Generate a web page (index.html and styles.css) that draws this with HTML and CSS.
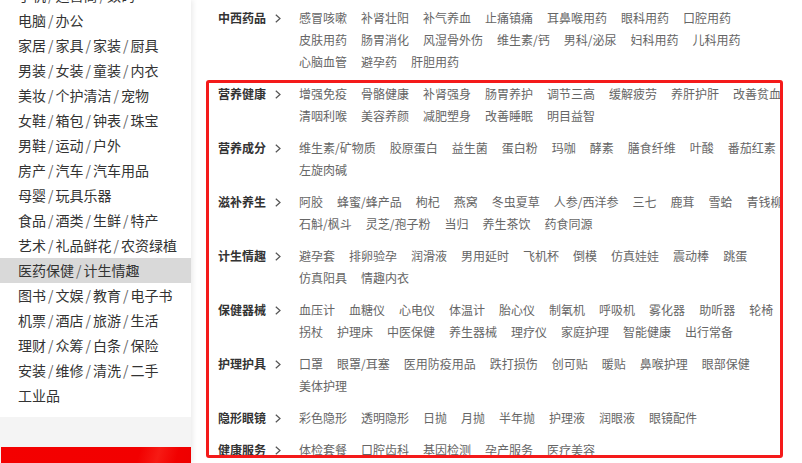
FILE: index.html
```html
<!DOCTYPE html>
<html lang="zh-CN">
<head>
<meta charset="utf-8">
<title>医药保健 / 计生情趣</title>
<link rel="stylesheet" href="styles.css">
</head>
<body>
<div class="page">
  <aside class="cate">
    <ul class="cate-list">
      <li class="cate-item"><a>手机</a><span class="sep">/</span><a>运营商</a><span class="sep">/</span><a>数码</a></li>
      <li class="cate-item"><a>电脑</a><span class="sep">/</span><a>办公</a></li>
      <li class="cate-item"><a>家居</a><span class="sep">/</span><a>家具</a><span class="sep">/</span><a>家装</a><span class="sep">/</span><a>厨具</a></li>
      <li class="cate-item"><a>男装</a><span class="sep">/</span><a>女装</a><span class="sep">/</span><a>童装</a><span class="sep">/</span><a>内衣</a></li>
      <li class="cate-item"><a>美妆</a><span class="sep">/</span><a>个护清洁</a><span class="sep">/</span><a>宠物</a></li>
      <li class="cate-item"><a>女鞋</a><span class="sep">/</span><a>箱包</a><span class="sep">/</span><a>钟表</a><span class="sep">/</span><a>珠宝</a></li>
      <li class="cate-item"><a>男鞋</a><span class="sep">/</span><a>运动</a><span class="sep">/</span><a>户外</a></li>
      <li class="cate-item"><a>房产</a><span class="sep">/</span><a>汽车</a><span class="sep">/</span><a>汽车用品</a></li>
      <li class="cate-item"><a>母婴</a><span class="sep">/</span><a>玩具乐器</a></li>
      <li class="cate-item"><a>食品</a><span class="sep">/</span><a>酒类</a><span class="sep">/</span><a>生鲜</a><span class="sep">/</span><a>特产</a></li>
      <li class="cate-item"><a>艺术</a><span class="sep">/</span><a>礼品鲜花</a><span class="sep">/</span><a>农资绿植</a></li>
      <li class="cate-item is-active"><a>医药保健</a><span class="sep">/</span><a>计生情趣</a></li>
      <li class="cate-item"><a>图书</a><span class="sep">/</span><a>文娱</a><span class="sep">/</span><a>教育</a><span class="sep">/</span><a>电子书</a></li>
      <li class="cate-item"><a>机票</a><span class="sep">/</span><a>酒店</a><span class="sep">/</span><a>旅游</a><span class="sep">/</span><a>生活</a></li>
      <li class="cate-item"><a>理财</a><span class="sep">/</span><a>众筹</a><span class="sep">/</span><a>白条</a><span class="sep">/</span><a>保险</a></li>
      <li class="cate-item"><a>安装</a><span class="sep">/</span><a>维修</a><span class="sep">/</span><a>清洗</a><span class="sep">/</span><a>二手</a></li>
      <li class="cate-item"><a>工业品</a></li>
    </ul>
    <div class="cate-gap"></div>
    <div class="cate-banner"></div>
  </aside>

  <section class="panel">
    <dl class="grp">
      <dt class="grp-title">中西药品<svg class="chev" width="6" height="9" viewBox="0 0 6 9"><polyline points="0.8,0.8 5,4.5 0.8,8.2"/></svg></dt>
      <dd class="grp-items"><a>感冒咳嗽</a><a>补肾壮阳</a><a>补气养血</a><a>止痛镇痛</a><a>耳鼻喉用药</a><a>眼科用药</a><a>口腔用药</a><a>皮肤用药</a><a>肠胃消化</a><a>风湿骨外伤</a><a>维生素/钙</a><a>男科/泌尿</a><a>妇科用药</a><a>儿科用药</a><a>心脑血管</a><a>避孕药</a><a>肝胆用药</a></dd>
    </dl>
    <dl class="grp">
      <dt class="grp-title">营养健康<svg class="chev" width="6" height="9" viewBox="0 0 6 9"><polyline points="0.8,0.8 5,4.5 0.8,8.2"/></svg></dt>
      <dd class="grp-items"><a>增强免疫</a><a>骨骼健康</a><a>补肾强身</a><a>肠胃养护</a><a>调节三高</a><a>缓解疲劳</a><a>养肝护肝</a><a>改善贫血</a><a>清咽利喉</a><a>美容养颜</a><a>减肥塑身</a><a>改善睡眠</a><a>明目益智</a></dd>
    </dl>
    <dl class="grp">
      <dt class="grp-title">营养成分<svg class="chev" width="6" height="9" viewBox="0 0 6 9"><polyline points="0.8,0.8 5,4.5 0.8,8.2"/></svg></dt>
      <dd class="grp-items"><a>维生素/矿物质</a><a>胶原蛋白</a><a>益生菌</a><a>蛋白粉</a><a>玛咖</a><a>酵素</a><a>膳食纤维</a><a>叶酸</a><a>番茄红素</a><a>左旋肉碱</a></dd>
    </dl>
    <dl class="grp">
      <dt class="grp-title">滋补养生<svg class="chev" width="6" height="9" viewBox="0 0 6 9"><polyline points="0.8,0.8 5,4.5 0.8,8.2"/></svg></dt>
      <dd class="grp-items"><a>阿胶</a><a>蜂蜜/蜂产品</a><a>枸杞</a><a>燕窝</a><a>冬虫夏草</a><a>人参/西洋参</a><a>三七</a><a>鹿茸</a><a>雪蛤</a><a>青钱柳</a><a>石斛/枫斗</a><a>灵芝/孢子粉</a><a>当归</a><a>养生茶饮</a><a>药食同源</a></dd>
    </dl>
    <dl class="grp">
      <dt class="grp-title">计生情趣<svg class="chev" width="6" height="9" viewBox="0 0 6 9"><polyline points="0.8,0.8 5,4.5 0.8,8.2"/></svg></dt>
      <dd class="grp-items"><a>避孕套</a><a>排卵验孕</a><a>润滑液</a><a>男用延时</a><a>飞机杯</a><a>倒模</a><a>仿真娃娃</a><a>震动棒</a><a>跳蛋</a><a>仿真阳具</a><a>情趣内衣</a></dd>
    </dl>
    <dl class="grp">
      <dt class="grp-title">保健器械<svg class="chev" width="6" height="9" viewBox="0 0 6 9"><polyline points="0.8,0.8 5,4.5 0.8,8.2"/></svg></dt>
      <dd class="grp-items"><a>血压计</a><a>血糖仪</a><a>心电仪</a><a>体温计</a><a>胎心仪</a><a>制氧机</a><a>呼吸机</a><a>雾化器</a><a>助听器</a><a>轮椅</a><a>拐杖</a><a>护理床</a><a>中医保健</a><a>养生器械</a><a>理疗仪</a><a>家庭护理</a><a>智能健康</a><a>出行常备</a></dd>
    </dl>
    <dl class="grp">
      <dt class="grp-title">护理护具<svg class="chev" width="6" height="9" viewBox="0 0 6 9"><polyline points="0.8,0.8 5,4.5 0.8,8.2"/></svg></dt>
      <dd class="grp-items"><a>口罩</a><a>眼罩/耳塞</a><a>医用防疫用品</a><a>跌打损伤</a><a>创可贴</a><a>暖贴</a><a>鼻喉护理</a><a>眼部保健</a><a>美体护理</a></dd>
    </dl>
    <dl class="grp">
      <dt class="grp-title">隐形眼镜<svg class="chev" width="6" height="9" viewBox="0 0 6 9"><polyline points="0.8,0.8 5,4.5 0.8,8.2"/></svg></dt>
      <dd class="grp-items"><a>彩色隐形</a><a>透明隐形</a><a>日抛</a><a>月抛</a><a>半年抛</a><a>护理液</a><a>润眼液</a><a>眼镜配件</a></dd>
    </dl>
    <dl class="grp">
      <dt class="grp-title">健康服务<svg class="chev" width="6" height="9" viewBox="0 0 6 9"><polyline points="0.8,0.8 5,4.5 0.8,8.2"/></svg></dt>
      <dd class="grp-items"><a>体检套餐</a><a>口腔齿科</a><a>基因检测</a><a>孕产服务</a><a>医疗美容</a></dd>
    </dl>
  </section>

  <div class="mark"></div>
</div>
</body>
</html>
```

FILE: styles.css
```css
* { box-sizing: border-box; }

html, body {
  margin: 0;
  padding: 0;
  background: #fff;
}

body {
  font-family: "Noto Sans CJK SC", "Noto Sans", sans-serif;
  color: #333;
}

.page {
  position: relative;
  display: flex;
  width: 802px;
  height: 463px;
  overflow: hidden;
  background: #fff;
}

/* ---------- left category list ---------- */
.cate {
  position: relative;
  z-index: 2;
  flex: none;
  width: 191px;
  display: flex;
  flex-direction: column;
  background: #f4f4f4;
  box-shadow: 2px 0 5px rgba(0, 0, 0, 0.08);
}

.cate-list {
  list-style: none;
  margin: -17px 0 0;
  padding: 0 0 9px;
  background: #fff;
}

.cate-item {
  height: 25px;
  line-height: 25px;
  padding-left: 18px;
  font-size: 14px;
  color: #333;
  white-space: nowrap;
}

.cate-item a {
  color: #333;
}

.cate-item .sep {
  margin: 0 2px;
  color: #666;
}

.cate-item.is-active {
  background: #d9d9d9;
}

.cate-gap {
  flex: none;
  height: 30px;
}

.cate-banner {
  flex: 1;
  margin-left: 1px;
  background: linear-gradient(105deg, #f40000 0%, #f20000 72%, #f71a14 82%, #f10000 92%, #ee0000 100%);
}

/* ---------- right sub-category panel ---------- */
.panel {
  flex: none;
  width: 590px;
  overflow: hidden;
  padding: 7px 0 0 27px;
  font-size: 12px;
}

.grp {
  display: flex;
  margin: 0 0 10px;
}

.grp-title {
  flex: none;
  width: 81px;
  display: flex;
  align-items: center;
  height: 22px;
  line-height: 22px;
  font-weight: bold;
  color: #333;
}

.chev {
  margin-left: 9px;
  fill: none;
  stroke: #555;
  stroke-width: 1.2;
}

.grp-items {
  flex: none;
  width: 490px;
  margin: 0;
  display: flex;
  flex-wrap: wrap;
  column-gap: 14px;
  line-height: 22px;
}

.grp-items a {
  color: #666;
  white-space: nowrap;
}

/* ---------- red annotation frame ---------- */
.mark {
  position: absolute;
  left: 206px;
  top: 80px;
  width: 577px;
  height: 378px;
  border: 3px solid #f41a1a;
  border-radius: 3px;
  z-index: 3;
  pointer-events: none;
}
```
